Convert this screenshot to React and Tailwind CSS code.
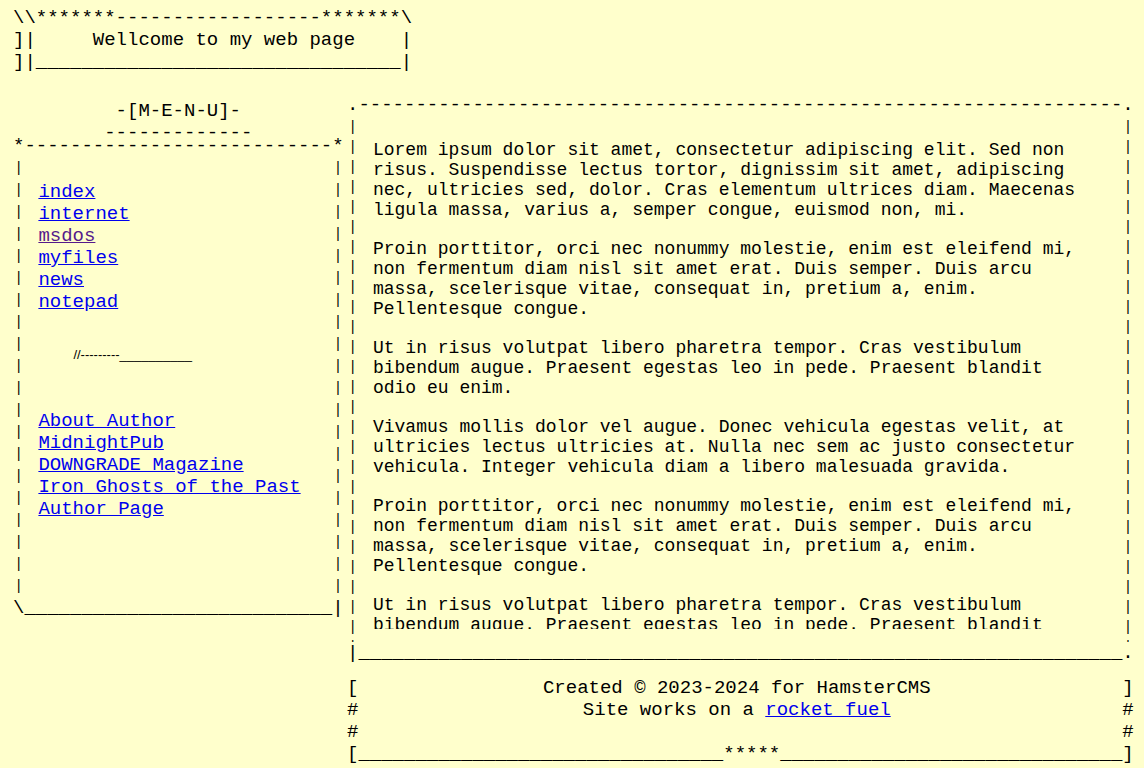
import React from "react";

const bars = (n) => Array.from({ length: n }, () => "|").join("\n");

const menuLinks = [
  { label: "index" },
  { label: "internet" },
  { label: "msdos", visited: true },
  { label: "myfiles" },
  { label: "news" },
  { label: "notepad" },
];

const moreLinks = [
  "About Author",
  "MidnightPub",
  "DOWNGRADE Magazine",
  "Iron Ghosts of the Past",
  "Author Page",
];

const paragraphs = [
  "Lorem ipsum dolor sit amet, consectetur adipiscing elit. Sed non risus. Suspendisse lectus tortor, dignissim sit amet, adipiscing nec, ultricies sed, dolor. Cras elementum ultrices diam. Maecenas ligula massa, varius a, semper congue, euismod non, mi.",
  "Proin porttitor, orci nec nonummy molestie, enim est eleifend mi, non fermentum diam nisl sit amet erat. Duis semper. Duis arcu massa, scelerisque vitae, consequat in, pretium a, enim. Pellentesque congue.",
  "Ut in risus volutpat libero pharetra tempor. Cras vestibulum bibendum augue. Praesent egestas leo in pede. Praesent blandit odio eu enim.",
  "Vivamus mollis dolor vel augue. Donec vehicula egestas velit, at ultricies lectus ultricies at. Nulla nec sem ac justo consectetur vehicula. Integer vehicula diam a libero malesuada gravida.",
  "Proin porttitor, orci nec nonummy molestie, enim est eleifend mi, non fermentum diam nisl sit amet erat. Duis semper. Duis arcu massa, scelerisque vitae, consequat in, pretium a, enim. Pellentesque congue.",
  "Ut in risus volutpat libero pharetra tempor. Cras vestibulum bibendum augue. Praesent egestas leo in pede. Praesent blandit odio eu enim.",
];

const Menu = () => {
  return (
    <div className="w-[330.6px] pt-[8px] whitespace-pre">
      <div className="text-center">-[M-E-N-U]-</div>
      <div className="text-center h-[13px]">-------------</div>
      <div>{"*" + "-".repeat(27) + "*"}</div>

      {/* box body */}
      <div className="flex h-[440px]">
        <div className="w-[11.4px] overflow-hidden text-center text-[14px]">
          {bars(20)}
        </div>
        <div className="flex-1 pl-[14px] pt-[24px]">
          <ul>
            {menuLinks.map((l) => (
              <li key={l.label}>
                <a
                  href="#"
                  className={`underline ${
                    l.visited ? "text-[#551a8b]" : "text-[#0000ee]"
                  }`}
                >
                  {l.label}
                </a>
              </li>
            ))}
          </ul>
          <div className="mt-[34px] pl-[35px] font-['Liberation_Sans',Arial,sans-serif] text-[13px] leading-[15px]">
            //---------__________
          </div>
          <ul className="mt-[48px]">
            {moreLinks.map((l) => (
              <li key={l}>
                <a href="#" className="underline text-[#0000ee]">
                  {l}
                </a>
              </li>
            ))}
          </ul>
        </div>
        <div className="w-[11.4px] overflow-hidden text-center text-[14px]">
          {bars(20)}
        </div>
      </div>

      <div>{"\\" + "_".repeat(27) + "|"}</div>
    </div>
  );
};

const MainBox = () => {
  return (
    <div className="w-[786.6px] mt-[2px] whitespace-pre">
      <div>{"." + "-".repeat(67) + "."}</div>
      <div className="flex h-[526px]">
        <div className="w-[11.4px] overflow-hidden pt-[1px] text-center text-[14px] leading-[20px]">
          {bars(27)}
        </div>
        <div className="flex-1 h-[513px] overflow-hidden pl-[14.6px] pt-[24px] whitespace-normal">
          <div className="w-[713px] text-[18px] leading-[20px]">
            {paragraphs.map((p, i) => (
              <p key={i} className="mb-[19px]">
                {p}
              </p>
            ))}
          </div>
        </div>
        <div className="w-[11.4px] overflow-hidden pt-[1px] text-center text-[14px] leading-[20px]">
          {bars(27)}
        </div>
      </div>
      <div>{"|" + "_".repeat(67) + "."}</div>
    </div>
  );
};

const Footer = () => {
  return (
    <div className="w-[786.6px] mt-[13px] whitespace-pre">
      <div className="flex">
        <span className="w-[11.4px]">[</span>
        <span className="flex-1 text-center pr-[7px]">
          Created © 2023-2024 for HamsterCMS
        </span>
        <span className="w-[11.4px]">]</span>
      </div>
      <div className="flex">
        <span className="w-[11.4px]">#</span>
        <span className="flex-1 text-center pr-[7px]">
          Site works on a{" "}
          <a href="#" className="underline text-[#0000ee]">
            rocket fuel
          </a>
        </span>
        <span className="w-[11.4px]">#</span>
      </div>
      <div className="flex justify-between">
        <span>#</span>
        <span>#</span>
      </div>
      <div>{"[" + "_".repeat(32) + "*****" + "_".repeat(30) + "]"}</div>
    </div>
  );
};

export default function App() {
  return (
    <div className="h-screen w-full overflow-hidden bg-[#ffffcc] text-black font-['Liberation_Mono','Courier_New',monospace] text-[19px] leading-[22px]">
      {/* header */}
      <div className="whitespace-pre pl-[13px] pt-[7px]">
        <div>{"\\\\*******------------------*******\\"}</div>
        <div>{"]|     Wellcome to my web page    |"}</div>
        <div>{"]|" + "_".repeat(32) + "|"}</div>
      </div>

      <div className="flex items-start mt-[19px] pl-[13px] gap-[3.4px]">
        <Menu />
        <div>
          <MainBox />
          <Footer />
        </div>
      </div>
    </div>
  );
}
